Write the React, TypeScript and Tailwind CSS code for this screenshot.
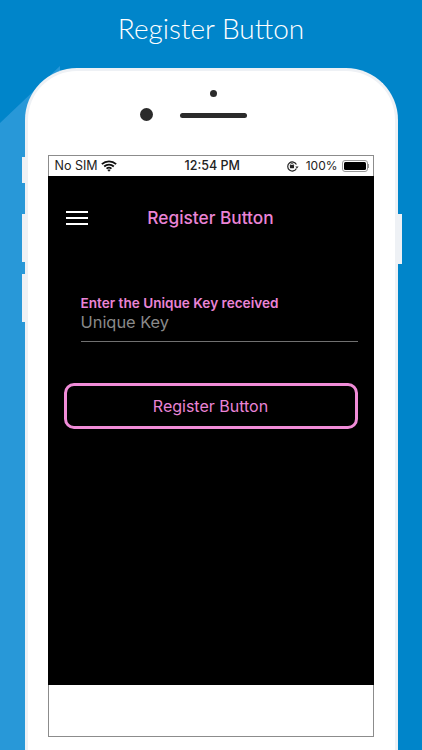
import React from "react";

const sans = "font-['Inter','Liberation_Sans',sans-serif]";

const WifiIcon = () => (
  <svg width="16" height="12" viewBox="0 0 15 11" fill="none" stroke="#111" strokeWidth="1.7">
    <path d="M0.8 3.8C4.6 0.2 10.4 0.2 14.2 3.8" />
    <path d="M3 6C5.6 3.6 9.4 3.6 12 6" />
    <path d="M5.2 8C6.5 6.9 8.5 6.9 9.8 8" />
    <path d="M7.5 11L6 9.3C6.9 8.7 8.1 8.7 9 9.3Z" fill="#111" stroke="none" />
  </svg>
);

const LockIcon = () => (
  <svg width="13" height="13" viewBox="0 0 12 12" fill="none">
    <path d="M9.6 7.8A4.2 4.2 0 1 1 9.6 4.2" stroke="#222" strokeWidth="1.1" />
    <path d="M8.6 6L11.6 6L10.1 7.8Z" fill="#222" />
    <rect x="3.6" y="4.6" width="3.8" height="3" rx="0.4" fill="#222" />
    <path d="M4.4 4.8V4A1.1 1.1 0 0 1 6.6 4V4.8" stroke="#222" strokeWidth="0.7" />
  </svg>
);

const StatusBar = () => (
  <div className={`relative flex h-[20px] shrink-0 items-center justify-between bg-white pr-[4px] pl-[6px] text-[12.5px] text-[#222] ${sans}`}>
    <div className="flex items-center gap-[3px]">
      <span>No SIM</span>
      <WifiIcon />
    </div>
    <span className="absolute left-[136px] font-medium">12:54 PM</span>
    <div className="flex items-center gap-[4px]">
      <LockIcon />
      <span className="ml-[3px] text-[12px]">100%</span>
      <div className="flex items-center">
        <div className="h-[12px] w-[26px] rounded-[3px] border border-[#999] p-[1px]">
          <div className="h-full w-full rounded-[1.5px] bg-black" />
        </div>
        <div className="h-[4px] w-[1px] bg-[#999]" />
      </div>
    </div>
  </div>
);

const App = () => {
  return (
    <div className="relative h-[750px] w-[422px] overflow-hidden bg-[#0085ca]">
      {/* lighter diagonal in the backdrop */}
      <div className="absolute inset-0 bg-[#2898d8] [clip-path:polygon(0_123px,60px_66px,60px_750px,0_750px)]" />

      <div className="relative flex flex-col items-center">
        <h1 className="mt-[10px] h-[36px] font-['Lato',sans-serif] text-[28px] leading-[36px] font-light text-white">
          Register Button
        </h1>

        {/* phone body */}
        <div className="relative mt-[22px] h-[700px] w-[373px] rounded-t-[52px] border-[3px] border-b-0 border-[#eef1f5] bg-white">
          <div className="absolute top-[86px] -left-[6px] h-[26px] w-[3px] bg-[#eef1f5]" />
          <div className="absolute top-[143px] -left-[6px] h-[48px] w-[3px] bg-[#eef1f5]" />
          <div className="absolute top-[203px] -left-[6px] h-[48px] w-[3px] bg-[#eef1f5]" />
          <div className="absolute top-[143px] -right-[7px] h-[50px] w-[4px] bg-[#eef1f5]" />

          {/* camera + speaker */}
          <div className="flex h-[84px] flex-col items-center">
            <div className="mt-[19px] ml-[4px] h-[7px] w-[7px] rounded-full bg-[#2b2b2b]" />
            <div className="mt-[11px] flex items-center">
              <div className="mr-[27px] h-[13px] w-[13px] rounded-full bg-[#2b2b2b]" />
              <div className="mt-[1px] mr-[36px] h-[5px] w-[67px] rounded-full bg-[#2b2b2b]" />
            </div>
          </div>

          {/* screen */}
          <div className="ml-[20px] flex h-[582px] w-[326px] flex-col border border-[#8c8c8c]">
            <StatusBar />
            <div className={`-mx-px flex h-[509px] shrink-0 flex-col bg-black ${sans}`}>
              <div className="relative flex h-[84px] shrink-0 items-center justify-center pb-[1px]">
                <div className="absolute top-[35px] left-[18px] flex w-[22px] flex-col gap-[4px]">
                  <div className="h-[2px] bg-white" />
                  <div className="h-[2px] bg-white" />
                  <div className="h-[2px] bg-white" />
                </div>
                <span className="text-[17.3px] font-medium text-[#ea84d6]">Register Button</span>
              </div>

              <div className="mt-[36px] ml-[33px] w-[277px] border-b border-[#707070] pb-[9px]">
                <div className="text-[13.6px] leading-[15px] font-semibold text-[#ea84d6]">
                  Enter the Unique Key received
                </div>
                <div className="mt-[1px] text-[16.4px] leading-[20px] text-[#8a8a8a]">Unique Key</div>
              </div>

              <button className="mt-[41px] ml-[16px] flex h-[46px] w-[294px] items-center justify-center rounded-[10px] border-[3px] border-[#f08cd8] text-[16px] text-[#ea84d6]">
                Register Button
              </button>
            </div>
            <div className="flex-1 bg-white" />
          </div>
        </div>
      </div>
    </div>
  );
};

export default App;
